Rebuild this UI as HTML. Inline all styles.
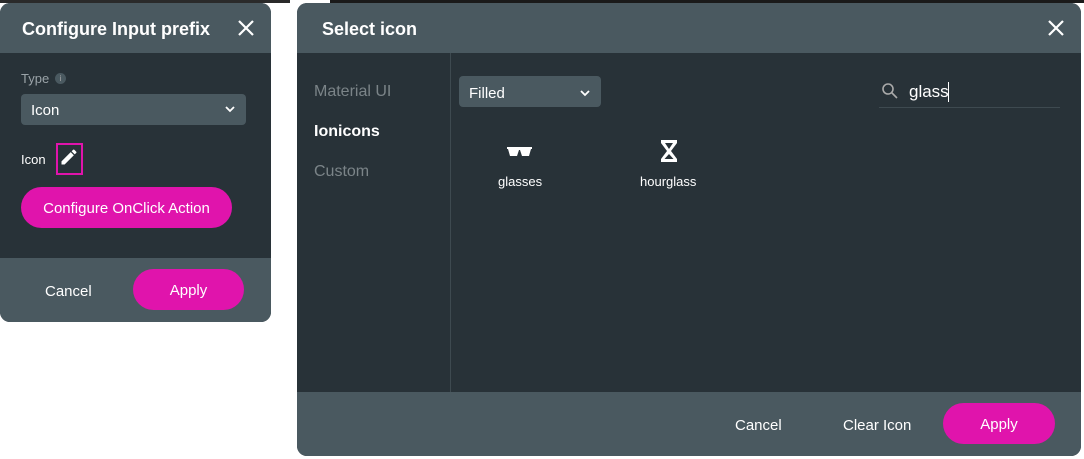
<!DOCTYPE html>
<html><head><style>
body{margin:0;width:1084px;height:459px;background:#fff;position:relative;overflow:hidden;font-family:"Liberation Sans",sans-serif;color:#fff}
.a{position:absolute}
.hdr{background:#4a5960}
.bd{background:#283238}
.btn{background:#e014ac;border-radius:22px;display:flex;align-items:center;justify-content:center;font-size:15px;padding-top:2px;box-sizing:border-box}
.t{position:absolute;white-space:nowrap}
</style></head><body>
<div class="a" style="left:0;top:0;width:290px;height:3px;background:#2a2a2a"></div>
<div class="a" style="left:330px;top:0;width:754px;height:3px;background:#1a1a1a"></div>
<!-- left modal -->
<div class="a bd" style="left:0;top:3px;width:271px;height:319px;border-radius:10px;overflow:hidden">
 <div class="a hdr" style="left:0;top:0;width:271px;height:50px"></div>
 <div class="t" style="left:22px;top:16px;font-size:18px;font-weight:bold">Configure Input prefix</div>
 <svg class="a" style="left:237px;top:16px" width="18" height="18" viewBox="0 0 18 18"><path d="M2 2L16 16M16 2L2 16" stroke="#fff" stroke-width="2.2"/></svg>
 <div class="t" style="left:21px;top:68px;font-size:13px;color:#9aa3a8">Type</div>
 <div class="a" style="left:55px;top:70px;width:11px;height:11px;border-radius:50%;background:#4a5960;font-size:8px;color:#aaa;text-align:center;line-height:11px">i</div>
 <div class="a hdr" style="left:21px;top:91px;width:225px;height:31px;border-radius:4px"></div>
 <div class="t" style="left:31px;top:99px;font-size:15px">Icon</div>
 <svg class="a" style="left:225px;top:103px" width="10" height="7"><path d="M1 1L5 5L9 1" stroke="#fff" stroke-width="1.8" fill="none"/></svg>
 <div class="t" style="left:21px;top:149px;font-size:13px">Icon</div>
 <div class="a" style="left:56px;top:140px;width:23px;height:28px;border:2px solid #e014ac"></div>
 <svg class="a" style="left:59px;top:144px" width="20" height="20" viewBox="0 0 24 24"><path d="M3 17.25V21h3.75L17.81 9.94l-3.75-3.75L3 17.25zM20.71 7.04a1 1 0 000-1.41l-2.34-2.34a1 1 0 00-1.41 0l-1.83 1.83 3.75 3.75 1.83-1.83z" fill="#fff"/></svg>
 <div class="a btn" style="left:21px;top:184px;width:211px;height:41px">Configure OnClick Action</div>
 <div class="a hdr" style="left:0;top:255px;width:271px;height:64px"></div>
 <div class="t" style="left:45px;top:280px;font-size:15px">Cancel</div>
 <div class="a btn" style="left:133px;top:266px;width:111px;height:41px">Apply</div>
</div>
<!-- right modal -->
<div class="a bd" style="left:297px;top:3px;width:784px;height:453px;border-radius:10px;overflow:hidden">
 <div class="a hdr" style="left:0;top:0;width:784px;height:50px"></div>
 <div class="t" style="left:25px;top:16px;font-size:18px;font-weight:bold">Select icon</div>
 <svg class="a" style="left:750px;top:16px" width="18" height="18" viewBox="0 0 18 18"><path d="M2 2L16 16M16 2L2 16" stroke="#fff" stroke-width="2.2"/></svg>
 <div class="a" style="left:153px;top:50px;width:1px;height:339px;background:#3e4a50"></div>
 <div class="t" style="left:17px;top:80px;font-size:16px;color:#7b8488">Material UI</div>
 <div class="t" style="left:17px;top:120px;font-size:16px;font-weight:bold">Ionicons</div>
 <div class="t" style="left:17px;top:160px;font-size:16px;color:#7b8488">Custom</div>
 <div class="a hdr" style="left:162px;top:73px;width:142px;height:31px;border-radius:4px"></div>
 <div class="t" style="left:172px;top:82px;font-size:15px">Filled</div>
 <svg class="a" style="left:283px;top:87px" width="10" height="7"><path d="M1 1L5 5L9 1" stroke="#fff" stroke-width="1.8" fill="none"/></svg>
 <svg class="a" style="left:584px;top:79px" width="18" height="18" viewBox="0 0 18 18"><circle cx="7" cy="7" r="5" stroke="#aaa" stroke-width="1.6" fill="none"/><path d="M11 11L16 16" stroke="#aaa" stroke-width="1.6"/></svg>
 <div class="t" style="left:612px;top:79px;font-size:17px">glass</div>
 <div class="a" style="left:651px;top:79px;width:1px;height:20px;background:#fff"></div>
 <div class="a" style="left:582px;top:104px;width:181px;height:1px;background:#3e4a50"></div>
 <svg class="a" style="left:210px;top:143px" width="25" height="11" viewBox="0 0 25 11"><path d="M0 1H25V3H24L22 10H15L13 4H12L10 10H3L1 3H0Z" fill="#fff"/></svg>
 <div class="t" style="left:201px;top:171px;font-size:13px">glasses</div>
 <svg class="a" style="left:363px;top:136px" width="18" height="24" viewBox="0 0 18 24"><path d="M1 1H17V4L11 12L17 20V23H1V20L7 12L1 4Z" fill="#fff"/><path d="M5 4H13L9 10Z M4.5 20L9 15L13.5 20Z" fill="#283238"/></svg>
 <div class="t" style="left:343px;top:171px;font-size:13px">hourglass</div>
 <div class="a hdr" style="left:0;top:389px;width:784px;height:64px"></div>
 <div class="t" style="left:438px;top:414px;font-size:15px">Cancel</div>
 <div class="t" style="left:546px;top:414px;font-size:15px">Clear Icon</div>
 <div class="a btn" style="left:646px;top:400px;width:112px;height:41px">Apply</div>
</div>
</body></html>
